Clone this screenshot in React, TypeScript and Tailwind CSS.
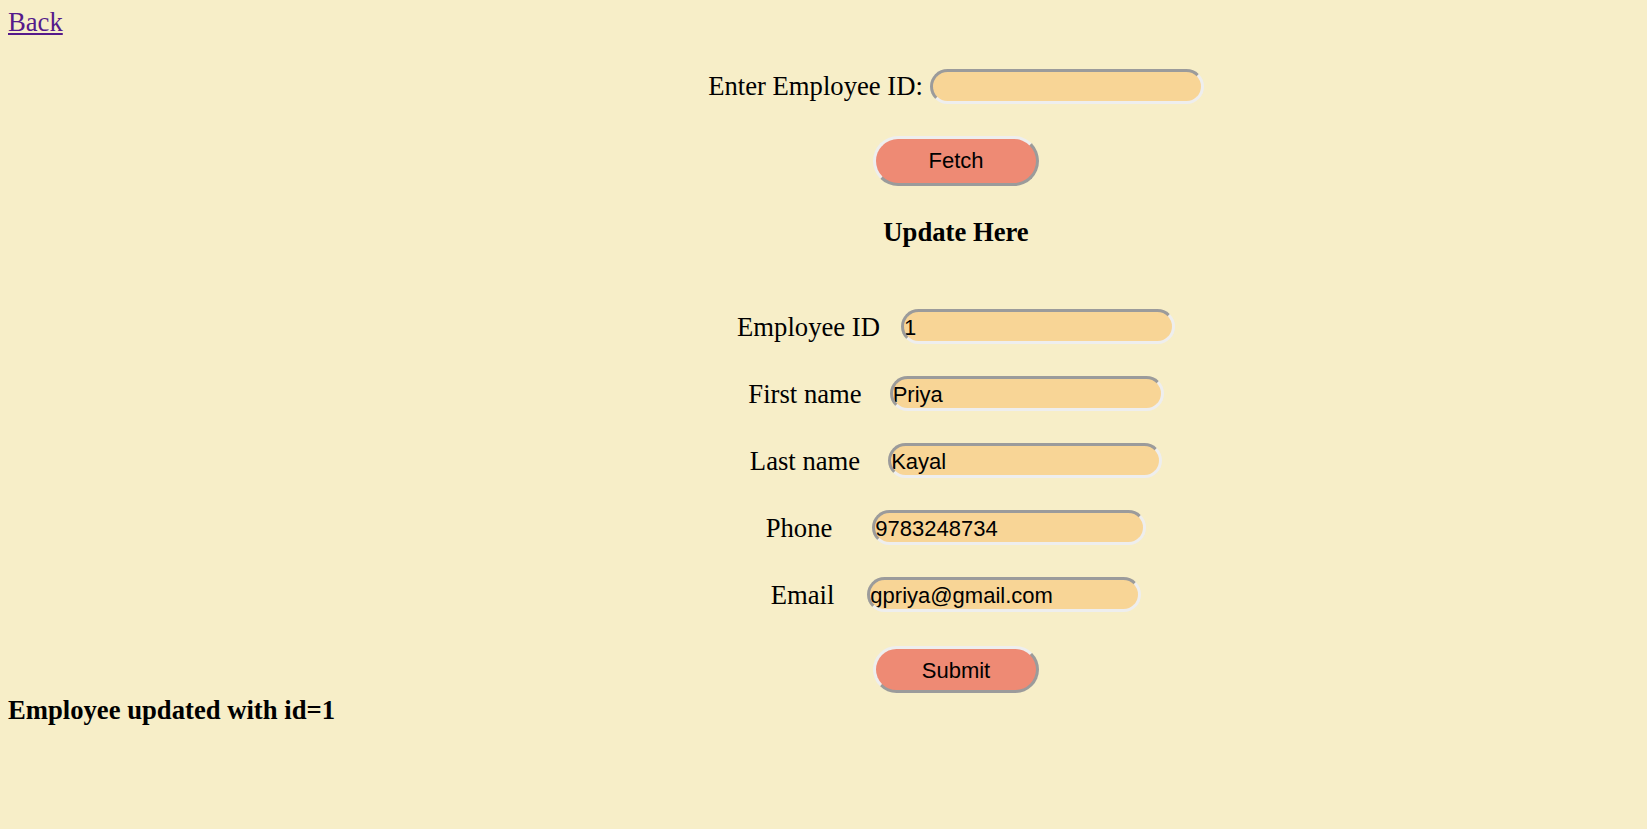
import React from 'react'

const inputCls =
  "w-[274px] h-[35px] rounded-full bg-[#f8d596] border-[3px] border-t-[#9b9b9b] border-l-[#9b9b9b] border-b-[#eeeeee] border-r-[#eeeeee] pl-0 pr-px pt-[2px] text-[22px] text-black font-['Liberation_Sans',Arial,sans-serif] outline-none"

const btnCls =
  "w-[166px] rounded-full bg-[#ee8a74] border-[3px] border-t-[#eeeeee] border-l-[#eeeeee] border-b-[#9b9b9b] border-r-[#9b9b9b] pt-[2px] text-[22px] text-black font-['Liberation_Sans',Arial,sans-serif]"

const rows = [
  { label: 'Employee ID', value: '1', gap: 'mr-[21px]' },
  { label: 'First name', value: 'Priya', gap: 'mr-[28px]' },
  { label: 'Last name', value: 'Kayal', gap: 'mr-[28px]' },
  { label: 'Phone', value: '9783248734', gap: 'mr-[40px]' },
  { label: 'Email', value: 'gpriya@gmail.com', gap: 'mr-[33px]' },
]

const App = () => {
  return (
    <div className="min-h-screen w-full bg-[#f7eec8] px-2 pt-[7px] text-black text-[26.67px] leading-[30.67px] font-['Liberation_Serif','Times_New_Roman',serif]">
      <a href="#" className="text-[#551a8b] underline">Back</a>

      <div className="flex flex-col items-center pl-[265px]">
        <div className="mt-[31px] flex items-center">
          <label className="mr-[7px]">Enter Employee ID:</label>
          <input type="text" className={inputCls + " w-[273px]"} />
        </div>

        <button className={btnCls + " h-[50px] mt-[32px]"}>Fetch</button>

        <h3 className="mt-[31px] font-bold">Update Here</h3>

        <div className="mt-[62px] flex flex-col items-center gap-[32px]">
          {rows.map((r) => (
            <div key={r.label} className="flex items-center">
              <label className={r.gap}>{r.label}</label>
              <input type="text" defaultValue={r.value} className={inputCls} />
            </div>
          ))}
        </div>

        <button className={btnCls + " h-[47px] mt-[34px]"}>Submit</button>
      </div>

      <h3 className="mt-[2px] font-bold">Employee updated with id=1</h3>
    </div>
  )
}

export default App
